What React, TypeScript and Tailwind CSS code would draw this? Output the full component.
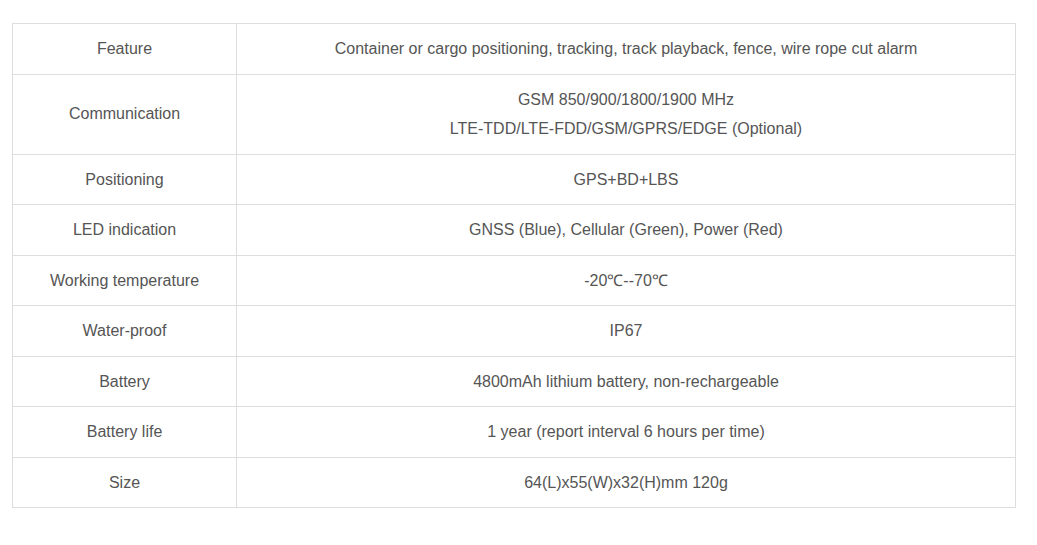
const rows: { label: string; value: string[] }[] = [
  { label: "Feature", value: ["Container or cargo positioning, tracking, track playback, fence, wire rope cut alarm"] },
  { label: "Communication", value: ["GSM 850/900/1800/1900 MHz", "LTE-TDD/LTE-FDD/GSM/GPRS/EDGE (Optional)"] },
  { label: "Positioning", value: ["GPS+BD+LBS"] },
  { label: "LED indication", value: ["GNSS (Blue), Cellular (Green), Power (Red)"] },
  { label: "Working temperature", value: ["-20\u2103--70\u2103"] },
  { label: "Water-proof", value: ["IP67"] },
  { label: "Battery", value: ["4800mAh lithium battery, non-rechargeable"] },
  { label: "Battery life", value: ["1 year (report interval 6 hours per time)"] },
  { label: "Size", value: ["64(L)x55(W)x32(H)mm 120g"] },
];

export default function App() {
  return (
    <div className="min-h-[545px] w-full bg-white pt-[23px] pl-[12px] font-['Liberation_Sans',Arial,sans-serif] text-[16px] text-[#555]">
      <table className="w-[1004px] border-collapse border border-[#dddddd] text-center">
        <tbody>
          {rows.map((r) => (
            <tr key={r.label}>
              <td className="w-[224px] border border-[#dddddd] py-[10px] leading-[29.5px]">{r.label}</td>
              <td className="border border-[#dddddd] py-[10px] leading-[29.5px]">
                {r.value.map((v) => (
                  <div key={v}>{v}</div>
                ))}
              </td>
            </tr>
          ))}
        </tbody>
      </table>
    </div>
  );
}
